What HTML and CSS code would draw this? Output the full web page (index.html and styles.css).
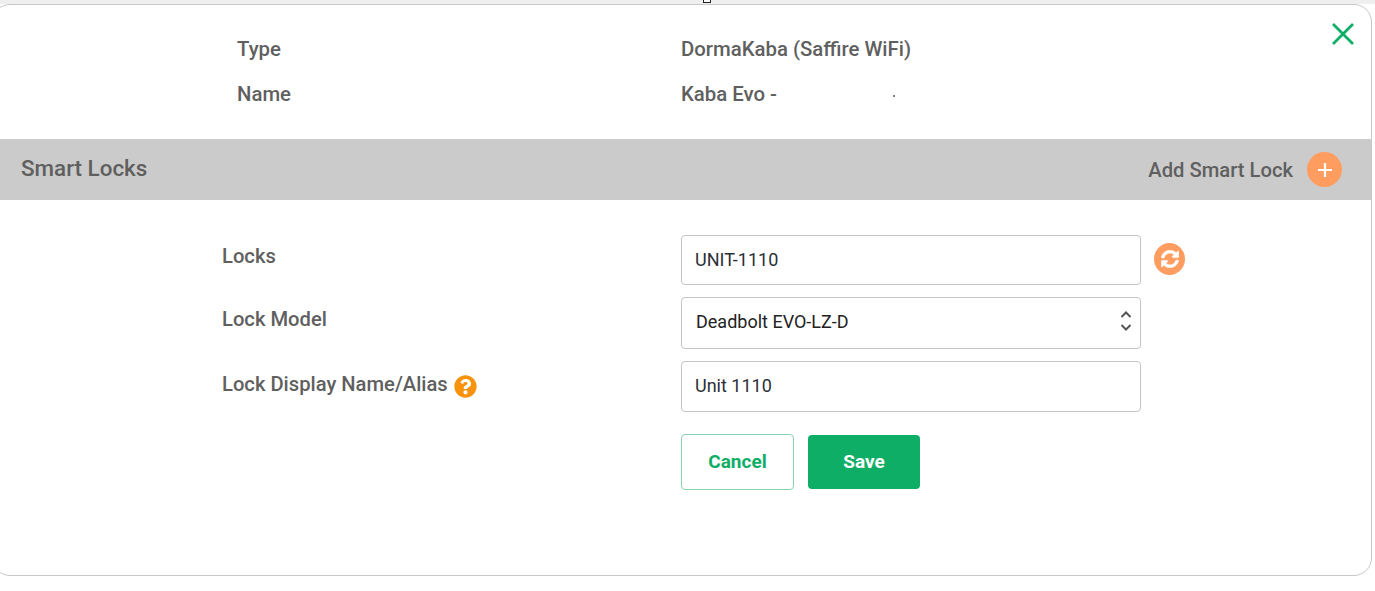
FILE: index.html
```html
<!DOCTYPE html>
<html lang="en">
<head>
<meta charset="utf-8">
<title>Smart Locks</title>
<link rel="stylesheet" href="styles.css">
</head>
<body>
<div class="topstrip"><span class="marker"></span></div>
<main class="modal">
  <button class="close" aria-label="Close">
    <svg width="24" height="24" viewBox="0 0 24 24"><path d="M2 2 L22 22 M22 2 L2 22" stroke="#0fae66" stroke-width="2.800" fill="none"/></svg>
  </button>
  <section class="info">
    <div class="info-row"><span class="info-label">Type</span><span>DormaKaba (Saffire WiFi)</span></div>
    <div class="info-row"><span class="info-label">Name</span><span>Kaba Evo -</span><span class="speck"></span></div>
  </section>
  <header class="band">
    <h2 class="band-title">Smart Locks</h2>
    <div class="band-action">
      <span>Add Smart Lock</span>
      <span class="add-btn">
        <svg width="16" height="16" viewBox="0 0 16 16"><path d="M8 1V15M1 8H15" stroke="#fff" stroke-width="2.200" fill="none"/></svg>
      </span>
    </div>
  </header>
  <form class="form">
    <div class="form-row row-locks">
      <label class="form-label">Locks</label>
      <div class="field h50">UNIT-1110</div>
      <span class="sync">
        <svg width="18" height="18" viewBox="0 0 512 512"><path fill="#fff" stroke="#fff" stroke-width="18" stroke-linejoin="round" d="M370.72 133.28C339.458 104.008 298.888 87.962 255.848 88c-77.458.068-144.328 53.178-162.791 126.85-1.344 5.363-6.122 9.15-11.651 9.15H24.103c-7.498 0-13.194-6.807-11.807-14.176C33.933 94.924 134.813 8 256 8c66.448 0 126.791 26.136 171.315 68.685L463.03 40.97C478.149 25.851 504 36.559 504 57.941V192c0 13.255-10.745 24-24 24H345.941c-21.382 0-32.09-25.851-16.971-40.971l41.75-41.749zM32 296h134.059c21.382 0 32.09 25.851 16.971 40.971l-41.75 41.75c31.262 29.273 71.835 45.319 114.876 45.28 77.418-.07 144.315-53.144 162.787-126.849 1.344-5.363 6.122-9.15 11.651-9.15h57.304c7.498 0 13.194 6.807 11.807 14.176C478.067 417.076 377.187 504 256 504c-66.448 0-126.791-26.136-171.315-68.685L48.97 471.03C33.851 486.149 8 475.441 8 454.059V320c0-13.255 10.745-24 24-24z"/></svg>
      </span>
    </div>
    <div class="form-row row-model">
      <label class="form-label">Lock Model</label>
      <div class="field h52 select">
        <span class="select-value">Deadbolt EVO-LZ-D</span>
        <svg class="chev" width="12" height="22" viewBox="0 0 12 22"><path d="M1.500 7 L6 2.500 L10.500 7 M1.500 15 L6 19.500 L10.500 15" stroke="#555" stroke-width="2" fill="none"/></svg>
      </div>
    </div>
    <div class="form-row row-alias">
      <label class="form-label">Lock Display Name/Alias
        <svg class="help" width="23" height="23" viewBox="0 0 512 512"><path fill="#f7930d" d="M504 256c0 136.997-111.043 248-248 248S8 392.997 8 256C8 119.083 119.043 8 256 8s248 111.083 248 248zM262.655 90c-54.497 0-89.255 22.957-116.549 63.758-3.536 5.286-2.353 12.415 2.715 16.258l34.699 26.31c5.205 3.947 12.621 3.008 16.665-2.122 17.864-22.658 30.113-35.797 57.303-35.797 20.429 0 45.698 13.148 45.698 32.958 0 14.976-12.363 22.667-32.534 33.976C247.128 238.528 216 254.941 216 296v4c0 6.627 5.373 12 12 12h56c6.627 0 12-5.373 12-12v-1.333c0-28.462 83.186-29.647 83.186-106.667 0-58.002-60.165-102-116.531-102zM256 338c-25.365 0-46 20.635-46 46 0 25.364 20.635 46 46 46s46-20.636 46-46c0-25.365-20.635-46-46-46z"/></svg>
      </label>
      <div class="field h51">Unit 1110</div>
    </div>
    <div class="actions">
      <button type="button" class="btn btn-cancel">Cancel</button>
      <button type="button" class="btn btn-save">Save</button>
    </div>
  </form>
</main>
</body>
</html>
```
FILE: styles.css
```css
* { box-sizing: border-box; }
html, body { margin: 0; padding: 0; background: #fff; }
body {
  width: 1375px;
  height: 591px;
  overflow: hidden;
  font-family: Roboto, "Liberation Sans", sans-serif;
  color: #5f5f5f;
}
.topstrip {
  position: relative;
  height: 4px;
  background: #efefef;
}
.marker {
  position: absolute;
  left: 703px;
  top: -2px;
  width: 8px;
  height: 5px;
  background: #fff;
  border: 1px solid #222;
}
.modal {
  position: relative;
  width: 1380px;
  height: 572px;
  margin-left: -8px;
  background: #fff;
  border: 1px solid #c8c8c8;
  border-radius: 18px;
}
.close {
  position: absolute;
  top: 17px;
  right: 16px;
  width: 24px;
  height: 24px;
  padding: 0;
  border: 0;
  background: none;
  display: flex;
}
.info {
  height: 134px;
  padding: 22px 0 0 244px;
  font-size: 20.350px;
  font-weight: 500;
}
.info-row {
  position: relative;
  display: flex;
  height: 45px;
  line-height: 45px;
}
.info-label { width: 444px; }
.speck {
  position: absolute;
  left: 656px;
  top: 23px;
  width: 2px;
  height: 2px;
  background: #8a8078;
}
.band {
  display: flex;
  align-items: center;
  justify-content: space-between;
  height: 61px;
  padding: 0 29px 0 28px;
  background: #cbcbcb;
}
.band-title {
  margin: 0 0 3px;
  font-size: 22.400px;
  font-weight: 500;
}
.band-action {
  display: flex;
  align-items: center;
  gap: 14px;
  font-size: 20.200px;
  font-weight: 500;
}
.add-btn {
  width: 35px;
  height: 35px;
  border-radius: 50%;
  background: #ff9c5f;
  display: flex;
  align-items: center;
  justify-content: center;
}
.form { padding: 35px 0 0 229px; }
.form-row {
  display: grid;
  grid-template-columns: 459px 460px auto;
  align-items: start;
  margin-bottom: 12px;
}
.form-label {
  font-size: 20.200px;
  font-weight: 500;
  line-height: 22px;
  display: flex;
  align-items: flex-start;
  gap: 6px;
}
.row-locks .form-label { padding-top: 10px; }
.row-model .form-label { padding-top: 11px; }
.row-alias .form-label { padding-top: 12px; }
.field {
  border: 1px solid #c4c4c4;
  border-radius: 4px;
  padding: 0 13px 2px;
  font-size: 18px;
  color: #2b2f36;
  display: flex;
  align-items: center;
}
.h50 { height: 50px; }
.h51 { height: 51px; }
.h52 { height: 52px; }
.select { justify-content: space-between; padding: 0 8px 4px 14px; }
.select-value { color: #222; }
.sync {
  width: 31px;
  height: 32px;
  margin: 8px 0 0 13px;
  border-radius: 50%;
  background: #ff9c5f;
  display: flex;
  align-items: center;
  justify-content: center;
}
.help { flex: none; margin-top: 2px; }
.actions {
  display: flex;
  align-items: center;
  gap: 14px;
  margin: 22px 0 0 459px;
}
.btn {
  font-family: Roboto, "Liberation Sans", sans-serif;
  font-size: 19px;
  font-weight: 700;
  border-radius: 4px;
  padding: 0 0 2px;
}
.btn-cancel {
  width: 113px;
  height: 56px;
  background: #fff;
  color: #0fae66;
  border: 1px solid #86d4b0;
}
.btn-save {
  width: 112px;
  height: 54px;
  background: #0fae66;
  color: #fff;
  border: 0;
}
```
